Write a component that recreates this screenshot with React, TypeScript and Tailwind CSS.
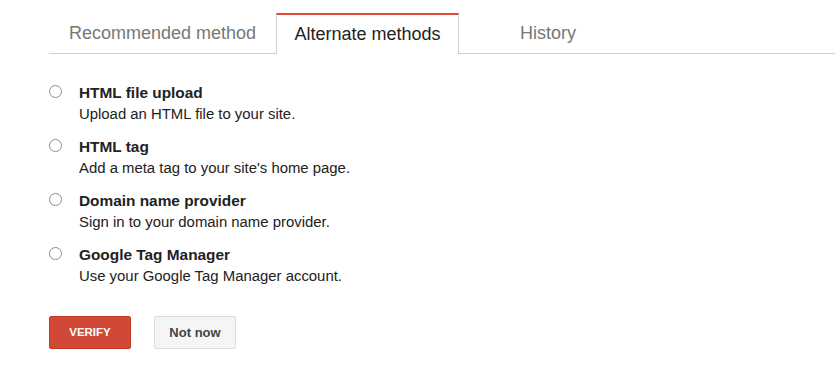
import React from "react";

const items = [
  { title: "HTML file upload", desc: "Upload an HTML file to your site." },
  { title: "HTML tag", desc: "Add a meta tag to your site's home page." },
  { title: "Domain name provider", desc: "Sign in to your domain name provider." },
  { title: "Google Tag Manager", desc: "Use your Google Tag Manager account." },
];

export default function App() {
  return (
    <div
      className="w-[835px] h-[382px] bg-white overflow-hidden"
      style={{ fontFamily: '"Liberation Sans", Arial, sans-serif' }}
    >
      <div className="pt-[13px] pl-[49px]">
        <div className="flex items-end border-b border-[#d0d0d0] h-[41px]">
          <div className="w-[227px] h-[40px] flex items-center justify-center text-[18px] text-[#777]">
            Recommended method
          </div>
          <div className="w-[183px] h-[41px] -mb-px bg-white border-t-2 border-t-[#dd4b39] border-x border-x-[#d0d0d0] flex items-center justify-center text-[18px] text-[#222]">
            <span>Alternate methods</span>
          </div>
          <div className="w-[178px] h-[40px] flex items-center justify-center text-[18px] text-[#777]">
            History
          </div>
        </div>
      </div>

      <div className="pl-[49px] pt-[30px] flex flex-col gap-[15px]">
        {items.map((it) => (
          <div key={it.title} className="flex">
            <div className="w-[30px] shrink-0 pt-[1px]">
              <div className="w-[13px] h-[13px] rounded-full border border-[#8c8c8c] bg-white" />
            </div>
            <div className="flex flex-col">
              <div className="text-[15.4px] font-bold text-[#222] leading-[18px]">{it.title}</div>
              <div className="text-[14.9px] text-[#222] leading-[18px] mt-[3px]">{it.desc}</div>
            </div>
          </div>
        ))}
      </div>

      <div className="pl-[49px] pt-[31px] flex gap-[23px]">
        <button className="w-[82px] h-[33px] rounded-[2px] bg-[#d14836] border border-[#c53727] text-white text-[11.5px] font-bold uppercase">
          Verify
        </button>
        <button className="w-[82px] h-[33px] rounded-[2px] bg-[#f5f5f5] border border-[#dcdcdc] text-[#444] text-[13px] font-bold">
          Not now
        </button>
      </div>
    </div>
  );
}
